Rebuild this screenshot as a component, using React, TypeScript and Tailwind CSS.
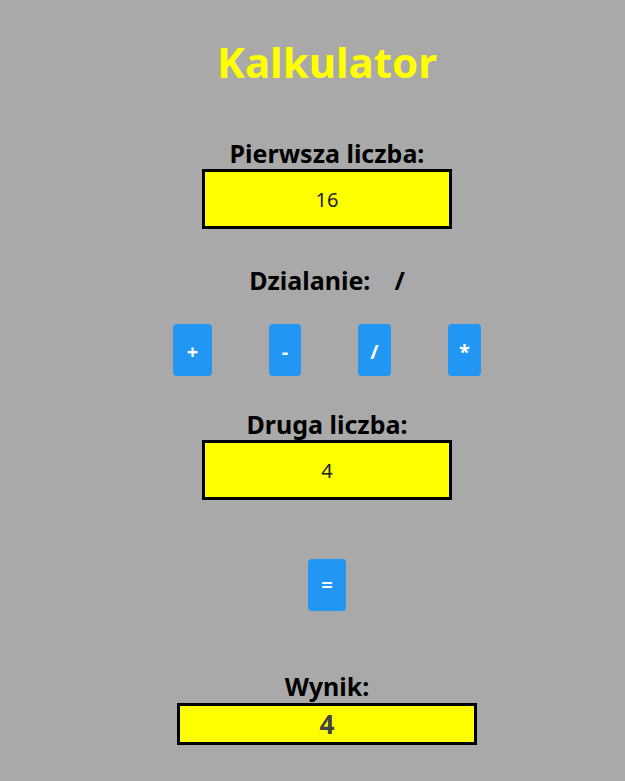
import { useState } from 'react'

const ops = [
  { sign: '+', w: 'w-[39px]' },
  { sign: '-', w: 'w-[32px]' },
  { sign: '/', w: 'w-[33px]' },
  { sign: '*', w: 'w-[33px]' },
]

export default function App() {
  const [a, setA] = useState('16')
  const [b, setB] = useState('4')
  const [op, setOp] = useState('/')
  const [result, setResult] = useState('4')

  const calc = () => {
    const x = parseFloat(a)
    const y = parseFloat(b)
    let r = 0
    if (op === '+') r = x + y
    if (op === '-') r = x - y
    if (op === '/') r = x / y
    if (op === '*') r = x * y
    setResult(String(r))
  }

  return (
    <main className="min-h-[781px] bg-[#a9a9a9] flex flex-col items-center pt-[38px] pl-[29px] font-['Noto_Sans',sans-serif] text-black">
      <h1 className="text-[42px] leading-[48px] font-bold text-[#ffff00]">Kalkulator</h1>

      <label className="mt-[53px] text-[25px] leading-[28px] font-bold">Pierwsza liczba:</label>
      <input
        value={a}
        onChange={(e) => setA(e.target.value)}
        className="mt-[2px] w-[250px] h-[60px] border-[3px] border-black bg-[#ffff00] text-center text-[20px] text-[#222] outline-none"
      />

      <div className="mt-[37px] flex items-center gap-[24px] text-[25px] leading-[28px] font-bold">
        <span>Dzialanie:</span>
        <span>{op}</span>
      </div>

      <div className="mt-[30px] flex gap-[57px]">
        {ops.map((o) => (
          <button
            key={o.sign}
            onClick={() => setOp(o.sign)}
            className={`${o.w} h-[52px] rounded-[4px] bg-[#2196f3] text-white text-[20px] font-bold leading-[24px] pt-[4px]`}
          >
            {o.sign}
          </button>
        ))}
      </div>

      <label className="mt-[34px] text-[25px] leading-[28px] font-bold">Druga liczba:</label>
      <input
        value={b}
        onChange={(e) => setB(e.target.value)}
        className="mt-[2px] w-[250px] h-[60px] border-[3px] border-black bg-[#ffff00] text-center text-[20px] text-[#222] outline-none"
      />

      <button
        onClick={calc}
        className="mt-[59px] w-[38px] h-[52px] rounded-[4px] bg-[#2196f3] text-white text-[20px] font-bold leading-[24px]"
      >
        =
      </button>

      <label className="mt-[61px] text-[25px] leading-[28px] font-bold">Wynik:</label>
      <div className="mt-[3px] w-[300px] h-[42px] border-[3px] border-black bg-[#ffff00] flex items-center justify-center text-[26px] font-bold text-[#444]">
        {result}
      </div>
    </main>
  )
}
